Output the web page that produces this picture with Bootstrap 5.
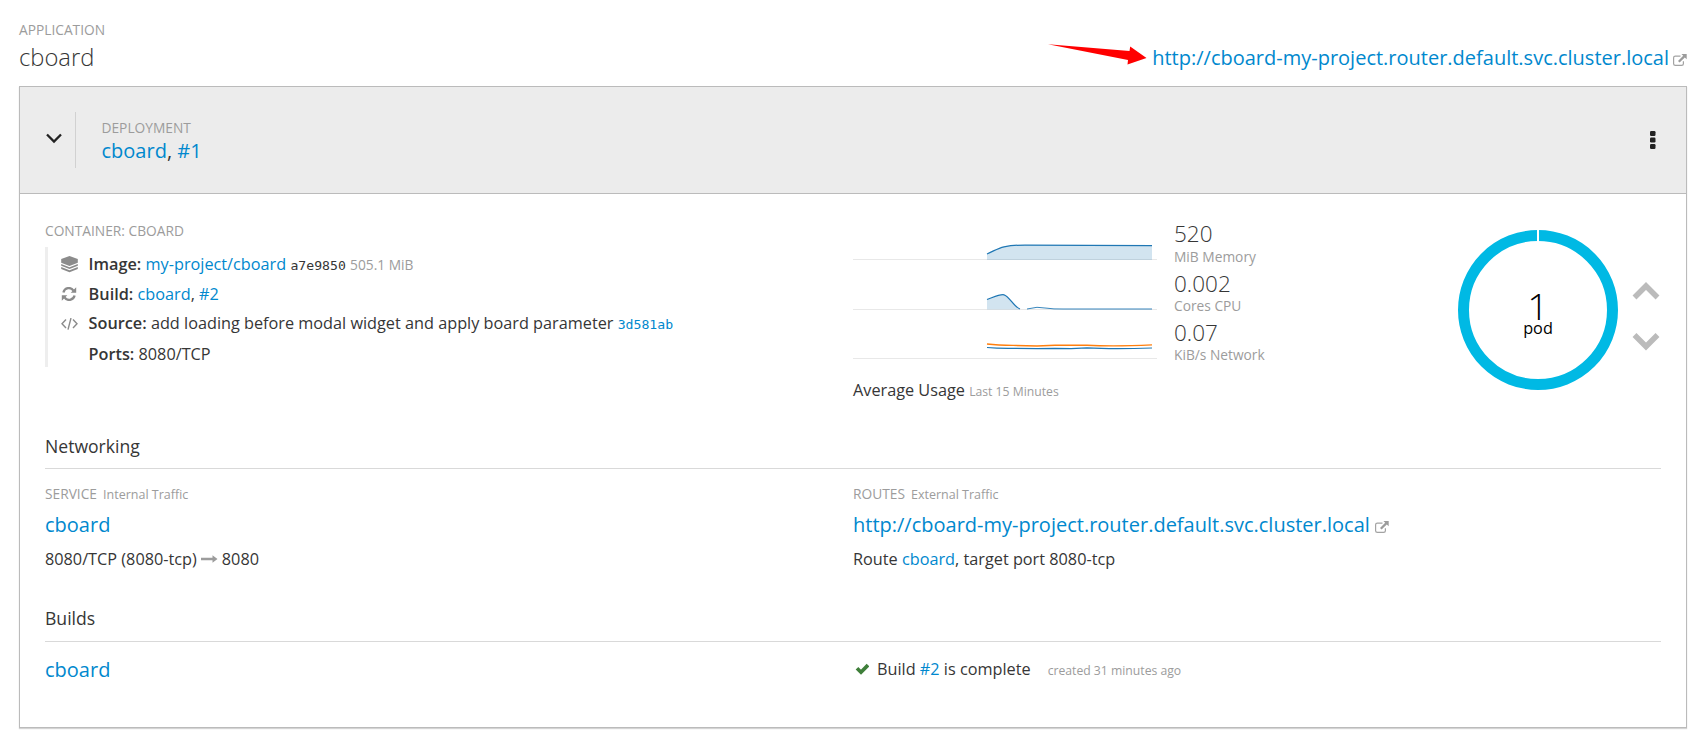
<!DOCTYPE html>
<html lang="en">
<head>
<meta charset="utf-8">
<meta name="viewport" content="width=device-width, initial-scale=1">
<title>cboard overview</title>
<link href="https://cdn.jsdelivr.net/npm/bootstrap@5.3.0/dist/css/bootstrap.min.css" rel="stylesheet">
<style>
body{font-family:"Open Sans",sans-serif;font-size:16.25px;line-height:24px;color:#363636;background:#fff;height:744px;overflow:hidden}
a{color:#0088ce;text-decoration:none}
svg{display:block;flex:none}
.page{padding:20px 19px 0}
.label-up{font-size:13.75px;line-height:20px;color:#9c9c9c;text-transform:uppercase;white-space:nowrap}
.label-up small{font-size:12.5px;text-transform:none;margin-left:2.500px}
.app-name{font-size:23.75px;font-weight:300;line-height:30px;margin:2px 0 14px}
.route-link{font-size:20px;line-height:30px;margin-bottom:13px}
.link-lg{font-size:20px;line-height:28px}
.ext-icon{margin:3px 0 0 5px}
.route-link .ext-icon{margin-left:4px}
.panel{border:1px solid #bbb;border-radius:0;box-shadow:0 1px 1px rgba(0,0,0,.17);height:642px}
.panel-head{height:107px;background:#ececec;border-bottom:1px solid #bbb;padding:0 30px 0 25px}
.divider{width:1px;height:56px;background:#d1d1d1;margin:0 25.5px 0 12px}
.deployment{padding-top:2px}
.panel-main{padding:27px 25px 0}
.spec{border-left:3px solid #eee;height:120px;margin-top:6px;padding:3px 0 0 13px}
.spec-row{display:flex;align-items:center;height:30px}
.spec-row:first-child{height:29px;padding-bottom:0}
.spec-icon{width:17px;margin-right:10.6px}
.spec b{font-weight:600}
.mono{font-family:"DejaVu Sans Mono","Liberation Mono",monospace;font-size:13.15px}
.muted{color:#9c9c9c}
.size-text{font-size:13.75px}
.metric{height:49px}
.metric:first-child{height:50px}
.metric-text{margin-left:17px}
.metric-num{font-size:22.5px;font-weight:300;line-height:26px}
.metric-unit{font-size:13.75px;line-height:19px;color:#9c9c9c}
.metric + .metric .metric-unit{margin-top:-1px}
.xs{font-size:12.2px}
.usage-caption{margin-top:9px}
.donut{width:160px;height:160px;margin-top:9px}
.donut-text{padding-top:7px}
.donut-num{font-size:37.5px;font-weight:300;line-height:28px;color:#000}
.donut-pod{font-size:16.25px;line-height:16px;color:#000}
.scaler{margin:60px 0 0 14px;gap:32px}
.section-title{font-size:17.6px;line-height:24px;font-weight:400;border-bottom:1px solid #d9d9d9;margin:30px 0 0;padding-bottom:10px}
.section-title.builds{margin-top:35px;padding-bottom:11px}
.traffic{padding-top:15px}
.traffic .link-lg{margin:6px 0 8px}
.builds-row{padding-top:14px}
.build-status{height:26px}
</style>
</head>
<body>
<svg width="0" height="0" class="position-absolute">
  <defs>
    <symbol id="ext" viewBox="0 0 14 12">
      <path d="M7.500 2.100H2.400Q.6 2.100.6 3.800v5.900q0 1.700 1.800 1.700h6.200q1.800 0 1.800-1.700V7.200" fill="none" stroke="#a3a3a3" stroke-width="1.200"/>
      <path d="M8.400 0H13.700V5.300L11.800 3.500 6.600 8.600 5 7 10.200 1.800z" fill="#9c9c9c"/>
    </symbol>
  </defs>
</svg>
<main class="page">
  <header class="d-flex justify-content-between align-items-end">
    <div>
      <div class="label-up">Application</div>
      <h1 class="app-name">cboard</h1>
    </div>
    <div class="route-link d-flex align-items-center">
      <svg width="100" height="22" viewBox="0 0 100 22" class="me-1 align-self-start"><path d="M0 1.200L81.500 8l.7-4.500L98.500 15 79.500 21.500 80 17z" fill="#f00"/></svg>
      <a href="#">http://cboard-my-project.router.default.svc.cluster.local</a>
      <svg class="ext-icon" width="14" height="12"><use href="#ext"/></svg>
    </div>
  </header>

  <section class="panel card">
    <div class="panel-head d-flex align-items-center">
      <svg class="mb-1" width="18" height="12" viewBox="0 0 18 12"><path d="M2 2.500l7 7 7-7" fill="none" stroke="#222" stroke-width="2.300"/></svg>
      <div class="divider"></div>
      <div class="flex-grow-1 deployment">
        <div class="label-up">Deployment</div>
        <div class="link-lg" style="margin-top:-1px"><a href="#">cboard</a>, <a href="#">#1</a></div>
      </div>
      <svg width="6" height="18" viewBox="0 0 6 18"><g fill="#222"><rect width="5.500" height="5" rx="1.200"/><rect y="6.500" width="5.500" height="5" rx="1.200"/><rect y="13" width="5.500" height="5" rx="1.200"/></g></svg>
    </div>

    <div class="panel-main">
      <div class="row g-0">
        <div class="col-6">
          <div class="label-up">Container: cboard</div>
          <div class="spec">
            <div class="spec-row">
              <svg class="spec-icon" width="17" height="17" viewBox="0 0 17 17"><g fill="#8b8b8b"><path d="M8.500 0L16.800 2.900v3.800L8.500 10 .2 6.700V2.900z"/><path d="M.2 7.900l8.300 3.300 8.300-3.300v1.900L8.500 13.100.2 9.800z"/><path d="M.2 10.900l8.300 3.300 8.300-3.300v2L8.500 16.300.2 12.900z"/></g></svg>
              <div><b>Image:</b> <a href="#">my-project/cboard</a> <span class="mono">a7e9850</span> <span class="muted size-text">505.1 MiB</span></div>
            </div>
            <div class="spec-row">
              <svg class="spec-icon" width="17" height="14" viewBox="0 0 17 14"><g fill="none" stroke="#8b8b8b" stroke-width="2.300"><path d="M2.400 5.400A5.600 5.600 0 0 1 12.500 3.600"/><path d="M13.600 8.600A5.600 5.600 0 0 1 3.500 10.400"/></g><path d="M15.200.3V5.700H9.700zM.8 13.700V8.300H6.300z" fill="#8b8b8b"/></svg>
              <div><b>Build:</b> <a href="#">cboard</a>, <a href="#">#2</a></div>
            </div>
            <div class="spec-row">
              <svg class="spec-icon" width="17" height="12" viewBox="0 0 17 12"><path d="M5 1.500L1 5.800l4 4.300M12 1.500l4 4.300-4 4.300M10 0L7 11.700" fill="none" stroke="#8b8b8b" stroke-width="1.400"/></svg>
              <div><b>Source:</b> add loading before modal widget and apply board parameter <a href="#" class="mono">3d581ab</a></div>
            </div>
            <div class="spec-row"><div class="spec-icon"></div><div><b>Ports:</b> 8080/TCP</div></div>
          </div>
        </div>
        <div class="col-6 d-flex justify-content-between">
          <div>
            <div class="metric d-flex">
              <svg width="304" height="39" viewBox="0 0 304 39"><path d="M0 38.500H304" stroke="#e8e8e8"/><path d="M134 33C141 30 145 27 151 25.800Q160 24 172 24L299 24.500V39H134z" fill="#1f77b4" fill-opacity=".2"/><path d="M134 33C141 30 145 27 151 25.800Q160 24 172 24L299 24.500" fill="none" stroke="#1f77b4" stroke-width="1.250"/></svg>
              <div class="metric-text"><div class="metric-num">520</div><div class="metric-unit">MiB Memory</div></div>
            </div>
            <div class="metric d-flex">
              <svg width="304" height="39" viewBox="0 0 304 39"><path d="M0 38.500H304" stroke="#e8e8e8"/><path d="M134 28.500C141 26 147 23 151 23.800C156 25 161 36 167 38.500H134z" fill="#1f77b4" fill-opacity=".2"/><path d="M134 28.500C141 26 147 23 151 23.800C156 25 161 36 167 38" fill="none" stroke="#1f77b4" stroke-width="1.250"/><path d="M174 38Q184 35 194 37.200Q200 38.200 210 38H299" fill="none" stroke="#1f77b4" stroke-width=".9"/></svg>
              <div class="metric-text"><div class="metric-num">0.002</div><div class="metric-unit">Cores CPU</div></div>
            </div>
            <div class="metric d-flex">
              <svg width="304" height="39" viewBox="0 0 304 39"><path d="M0 38.500H304" stroke="#e8e8e8"/><path d="M134 24Q145 25.300 160 25.400L184 26 202 25.200 234 25.200Q260 26.600 299 24.900" fill="none" stroke="#ff7f0e" stroke-width="1.400"/><path d="M134 27.500Q145 28.500 160 28.300L184 28.700 202 28.300 218 28.600 234 27.900Q260 29.300 299 28" fill="none" stroke="#1f77b4" stroke-width="1.250"/></svg>
              <div class="metric-text"><div class="metric-num">0.07</div><div class="metric-unit">KiB/s Network</div></div>
            </div>
            <div class="usage-caption">Average Usage <span class="muted xs">Last 15 Minutes</span></div>
          </div>
          <div class="d-flex">
            <div class="donut position-relative">
              <svg width="160" height="160" viewBox="0 0 160 160"><circle cx="80" cy="80" r="74.500" fill="none" stroke="#00b9e4" stroke-width="11"/><path d="M80 0V12" stroke="#fff" stroke-width="2"/></svg>
              <div class="donut-text position-absolute top-50 start-50 translate-middle text-center">
                <div class="donut-num">1</div><div class="donut-pod">pod</div>
              </div>
            </div>
            <div class="scaler d-flex flex-column">
              <svg width="29" height="19" viewBox="0 0 29 19"><path d="M2.500 16.500L14 5 25.500 16.500" fill="none" stroke="#bbb" stroke-width="5.500"/></svg>
              <svg width="29" height="19" viewBox="0 0 29 19"><path d="M2.500 3L14 14.500 25.500 3" fill="none" stroke="#bbb" stroke-width="5.500"/></svg>
            </div>
          </div>
        </div>
      </div>

      <h2 class="section-title">Networking</h2>
      <div class="row g-0 traffic">
        <div class="col-6">
          <div class="label-up">Service <small>Internal Traffic</small></div>
          <div class="link-lg"><a href="#">cboard</a></div>
          <div class="d-flex align-items-center">8080/TCP (8080-tcp)
            <svg class="mx-1" width="17" height="8" viewBox="0 0 17 8"><path d="M0 2.800h11.500V.3L16.500 4l-5 3.700V5.200H0z" fill="#9c9c9c"/></svg>
            8080</div>
        </div>
        <div class="col-6">
          <div class="label-up">Routes <small>External Traffic</small></div>
          <div class="link-lg d-flex align-items-center"><a href="#">http://cboard-my-project.router.default.svc.cluster.local</a><svg class="ext-icon" width="14" height="12"><use href="#ext"/></svg></div>
          <div>Route <a href="#">cboard</a>, target port 8080-tcp</div>
        </div>
      </div>

      <h2 class="section-title builds">Builds</h2>
      <div class="row g-0 builds-row">
        <div class="col-6 link-lg"><a href="#">cboard</a></div>
        <div class="col-6 d-flex align-items-center build-status">
          <svg width="16" height="12" viewBox="0 0 16 12" class="me-2"><path d="M4 5.200l4 4L15 2" fill="none" stroke="#3f7f3a" stroke-width="3.700"/></svg>
          <span>Build <a href="#">#2</a> is complete</span>
          <span class="muted xs pt-1" style="margin-left:17px">created 31 minutes ago</span>
        </div>
      </div>
    </div>
  </section>
</main>
<script src="https://cdn.jsdelivr.net/npm/bootstrap@5.3.0/dist/js/bootstrap.bundle.min.js"></script>
</body>
</html>
